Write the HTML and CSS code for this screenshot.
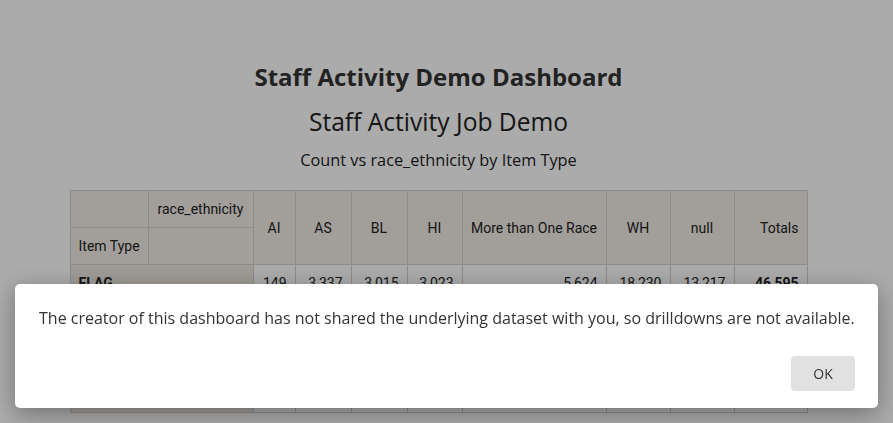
FILE: index.html
```html
<!DOCTYPE html>
<html>
<head>
<meta charset="utf-8">
<link rel="stylesheet" href="styles.css">
</head>
<body>
<div class="page">
  <h1 class="dash-title">Staff Activity Demo Dashboard</h1>
  <h2 class="job-title">Staff Activity Job Demo</h2>
  <div class="chart-title">Count vs race_ethnicity by Item Type</div>
  <table class="pivot">
    <colgroup>
      <col class="c1"><col class="c2"><col class="c3"><col class="c4"><col class="c5"><col class="c6"><col class="c7"><col class="c8"><col class="c9"><col class="c10">
    </colgroup>
    <thead>
      <tr>
        <th class="hd"></th>
        <th class="hd axis">race_ethnicity</th>
        <th class="hd" rowspan="2">AI</th>
        <th class="hd" rowspan="2">AS</th>
        <th class="hd" rowspan="2">BL</th>
        <th class="hd" rowspan="2">HI</th>
        <th class="hd" rowspan="2">More than One Race</th>
        <th class="hd" rowspan="2">WH</th>
        <th class="hd" rowspan="2">null</th>
        <th class="hd tot" rowspan="2">Totals</th>
      </tr>
      <tr>
        <th class="hd left">Item Type</th>
        <th class="hd"></th>
      </tr>
    </thead>
    <tbody>
      <tr>
        <th class="rh" colspan="2">FLAG</th>
        <td>149</td><td>3,337</td><td>3,015</td><td>3,023</td><td>5,624</td><td>18,230</td><td>13,217</td><td class="b">46,595</td>
      </tr>
      <tr>
        <th class="rh" colspan="2">NOTE</th>
        <td>88</td><td>1,912</td><td>1,744</td><td>1,801</td><td>3,107</td><td>10,466</td><td>7,530</td><td class="b">26,648</td>
      </tr>
      <tr>
        <th class="rh" colspan="2">TASK</th>
        <td>61</td><td>1,425</td><td>1,271</td><td>1,222</td><td>2,517</td><td>7,764</td><td>5,687</td><td class="b">19,947</td>
      </tr>
      <tr>
        <th class="rh" colspan="2">Totals</th>
        <td class="b">298</td><td class="b">6,674</td><td class="b">6,030</td><td class="b">6,046</td><td class="b">11,248</td><td class="b">36,460</td><td class="b">26,434</td><td class="b">93,190</td>
      </tr>
    </tbody>
  </table>
</div>

<div class="overlay"></div>
<div class="dialog">
  <p class="msg">The creator of this dashboard has not shared the underlying dataset with you, so drilldowns are not available.</p>
  <div class="actions"><button class="ok">OK</button></div>
</div>
</body>
</html>
```

FILE: styles.css
```css
html, body {
  margin: 0;
  padding: 0;
  background: #ffffff;
}
body {
  width: 893px;
  height: 423px;
  overflow: hidden;
  font-family: "Open Sans", "Liberation Sans", sans-serif;
  color: #333;
}
.page {
  width: 877px;
  padding-top: 62px;
  text-align: center;
}
.dash-title {
  margin: 0;
  font-size: 24px;
  font-weight: 700;
  line-height: 30px;
  color: #333;
}
.job-title {
  margin: 14px 0 0 0;
  font-size: 24.6px;
  font-weight: 400;
  line-height: 32px;
  color: #222;
}
.chart-title {
  margin-top: 10px;
  font-size: 16.3px;
  line-height: 24px;
  color: #222;
}
.pivot {
  margin: 18px auto 0 auto;
  border-collapse: collapse;
  table-layout: fixed;
  width: 737px;
  font-family: Roboto, "Liberation Sans", sans-serif;
  font-size: 14px;
  color: #222;
}
.c1 { width: 78px; }
.c2 { width: 105px; }
.c3 { width: 42px; }
.c4 { width: 56px; }
.c5 { width: 56px; }
.c6 { width: 55px; }
.c7 { width: 144px; }
.c8 { width: 64px; }
.c9 { width: 64px; }
.c10 { width: 73px; }
.pivot th, .pivot td {
  border: 1px solid #d4d0cc;
  height: 36px;
  padding: 0 8px;
  white-space: nowrap;
}
.pivot th.hd {
  background: #f2ede8;
  font-weight: 400;
  text-align: center;
}
.pivot th.hd.left { text-align: left; }
.pivot th.hd.tot { text-align: right; }
.pivot th.hd.axis { vertical-align: middle; }
.pivot th.rh {
  background: #ede7e1;
  text-align: left;
  font-weight: 700;
}
.pivot td {
  text-align: right;
  background: #ffffff;
}
.pivot td.b { font-weight: 700; }

.overlay {
  position: fixed;
  inset: 0;
  background: rgba(0, 0, 0, 0.33);
}
.dialog {
  position: fixed;
  left: 15px;
  top: 284px;
  width: 863px;
  height: 124px;
  box-sizing: border-box;
  background: #ffffff;
  border-radius: 5px;
  box-shadow: 0 6px 24px rgba(0, 0, 0, 0.35);
  padding: 22px 23px 17px 24px;
  display: flex;
  flex-direction: column;
  justify-content: space-between;
  text-align: left;
}
.msg {
  margin: 0;
  font-size: 16px;
  line-height: 24px;
  color: #333;
}
.actions {
  display: flex;
  justify-content: flex-end;
}
.ok {
  width: 64px;
  height: 35px;
  border: none;
  border-radius: 4px;
  background: #e1e1e1;
  font-family: "Open Sans", "Liberation Sans", sans-serif;
  font-size: 14px;
  color: #333;
  cursor: pointer;
}
```
